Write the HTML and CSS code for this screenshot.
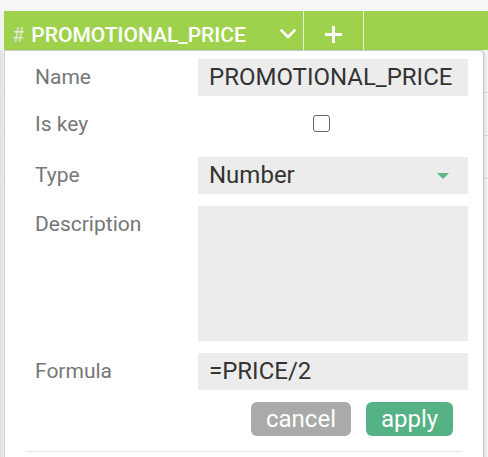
FILE: index.html
```html
<!DOCTYPE html>
<html>
<head>
<meta charset="utf-8">
<link rel="stylesheet" href="styles.css">
</head>
<body>
<div class="page">
  <div class="topband"></div>
  <div class="header">
    <div class="hcell hcell-name">
      <span class="hash">#</span>
      <span class="hname">PROMOTIONAL_PRICE</span>
      <svg class="chev" width="16" height="10" viewBox="0 0 16 10"><path d="M1.5 1.5 L8 8 L14.5 1.5" fill="none" stroke="#fff" stroke-width="2.6" stroke-linecap="round" stroke-linejoin="round"/></svg>
    </div>
    <div class="hcell hcell-add">
      <svg width="19" height="19" viewBox="0 0 19 19"><path d="M9.5 1 V18 M1 9.5 H18" stroke="#fff" stroke-width="3"/></svg>
    </div>
    <div class="hcell hcell-rest"></div>
  </div>
  <div class="grid">
    <div class="gline"></div>
    <div class="gline"></div>
    <div class="gline"></div>
  </div>

  <div class="popup">
    <div class="form">
      <div class="label">Name</div>
      <div class="field">PROMOTIONAL_PRICE</div>

      <div class="label row-key">Is key</div>
      <div class="keycell row-key"><span class="checkbox"></span></div>

      <div class="label row-type">Type</div>
      <div class="field select row-type">Number<span class="caret"></span></div>

      <div class="label">Description</div>
      <div class="textarea"></div>

      <div class="label">Formula</div>
      <div class="field">=PRICE/2</div>
    </div>
    <div class="actions">
      <button class="btn btn-cancel">cancel</button>
      <button class="btn btn-apply">apply</button>
    </div>
    <div class="divider"></div>
  </div>
</div>
</body>
</html>
```

FILE: styles.css
```css
html, body {
  margin: 0;
  padding: 0;
}
body {
  width: 488px;
  height: 457px;
  overflow: hidden;
  background: #f0f0f0;
  font-family: Roboto, "Liberation Sans", sans-serif;
}
.page {
  position: relative;
  width: 488px;
  height: 457px;
  overflow: hidden;
}
.topband {
  height: 11px;
  background: #f6f6f6;
}
.header {
  display: flex;
  height: 39px;
  background: #9fd24c;
  border-left: 3px solid #f2f2f2;
}
.hcell {
  display: flex;
  align-items: center;
  border-left: 1px solid #e9f5d6;
  box-sizing: border-box;
}
.hcell-name {
  width: 300px;
  padding: 8px 0 0 8px;
  color: #fff;
}
.hash {
  font-size: 20px;
  color: #dfe8d2;
  margin-right: 7px;
}
.hname {
  font-size: 21px;
  font-weight: 500;
}
.chev {
  margin-left: auto;
  margin-right: 7px;
  margin-top: -2px;
}
.hcell-add {
  width: 60px;
  justify-content: center;
  padding-top: 8px;
}
.hcell-rest {
  flex: 1;
}
.grid {
  height: 407px;
  background: #f4f4f4;
  border-left: 3px solid #e3e3e3;
  display: flex;
  flex-direction: column;
}
.gline {
  height: 1px;
  background: #dcdcdc;
  margin-top: 42px;
}
.popup {
  position: absolute;
  left: 4px;
  top: 50px;
  width: 480px;
  height: 420px;
  box-sizing: border-box;
  background: #fff;
  border: 1px solid #c9c9c9;
  border-radius: 0 5px 0 0;
  box-shadow: 2px 0 2px rgba(0,0,0,0.08);
  padding: 8px 15px 0 30px;
}
.form {
  display: grid;
  grid-template-columns: 163px 270px;
  row-gap: 12px;
}
.label {
  font-size: 21px;
  color: #777;
  line-height: 37px;
  height: 37px;
}
.field {
  height: 37px;
  line-height: 37px;
  background: #ececec;
  color: #333;
  font-size: 24px;
  padding-left: 11px;
  box-sizing: border-box;
  white-space: nowrap;
  overflow: hidden;
}
.row-key {
  height: 31px;
  line-height: 33px;
}
.keycell {
  display: flex;
  align-items: center;
}
.checkbox {
  display: block;
  width: 15px;
  height: 15px;
  border: 1.5px solid #666;
  border-radius: 3px;
  margin-left: 115px;
  margin-top: -1px;
}
.row-type {
  margin-top: 6px;
}
.select {
  display: flex;
  align-items: center;
}
.caret {
  margin-left: auto;
  margin-right: 19px;
  width: 0;
  height: 0;
  border-left: 6.5px solid transparent;
  border-right: 6.5px solid transparent;
  border-top: 6px solid #5bb585;
}
.textarea {
  height: 135px;
  background: #ececec;
}
.actions {
  display: flex;
  justify-content: flex-end;
  gap: 15px;
  margin-top: 12px;
  padding-right: 15px;
}
.btn {
  border: none;
  height: 34px;
  border-radius: 6px;
  color: #fff;
  font-family: Roboto, "Liberation Sans", sans-serif;
  font-size: 24px;
  padding: 0;
  line-height: 34px;
}
.btn-cancel {
  width: 100px;
  background: #aaaaaa;
}
.btn-apply {
  width: 87px;
  background: #55b284;
}
.divider {
  height: 1px;
  background: #e6e6e6;
  margin: 15px 6px 0 -9px;
}
```
